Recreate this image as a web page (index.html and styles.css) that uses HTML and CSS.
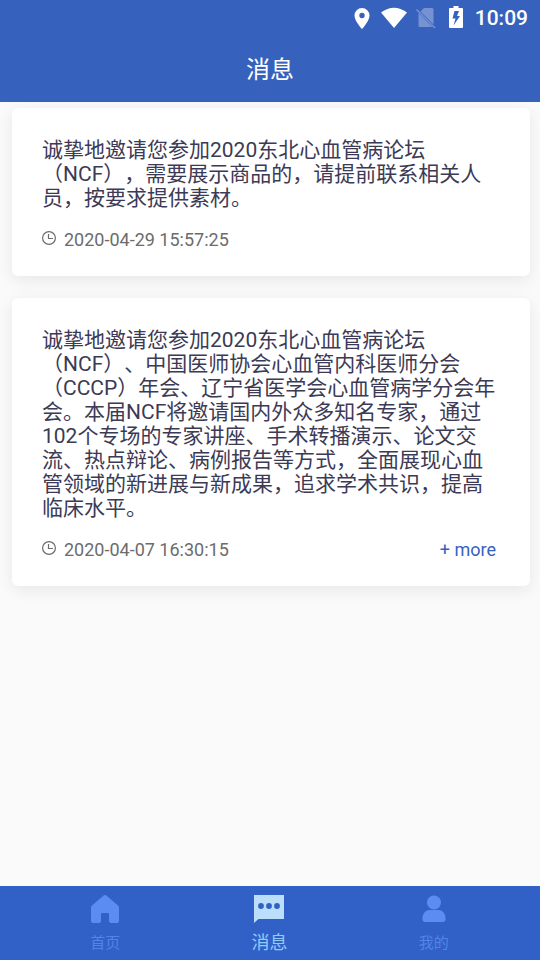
FILE: index.html
```html
<!DOCTYPE html>
<html lang="zh-CN">
<head>
<meta charset="utf-8">
<meta name="viewport" content="width=device-width, initial-scale=1">
<title>消息</title>
<link rel="stylesheet" href="styles.css">
</head>
<body>
<header class="header">
  <div class="status">
    <svg class="status-pin" width="16" height="22" viewBox="0 0 16 22"><path fill="#fff" fill-rule="evenodd" d="M8 1a7.500 7.500 0 0 0-7.500 7.500C.5 14 8 22 8 22s7.500-8 7.500-13.500A7.500 7.500 0 0 0 8 1zm0 4.800a2.700 2.700 0 1 1 0 5.400 2.700 2.700 0 0 1 0-5.400z"/></svg>
    <svg class="status-wifi" width="26" height="22" viewBox="0 0 26 22"><path fill="#fff" d="M0 5.500Q13-4 26 5.500L13 21z"/></svg>
    <svg class="status-sim" width="20" height="22" viewBox="0 0 20 22"><path fill="#7692d2" d="M8 1h8q1.500 0 1.500 1.500V17.500L4.500 4.500zM2.500 6 16.500 20H4q-1.500 0-1.500-1.500z"/><path stroke="#7692d2" stroke-width="1.400" d="m.5 2.500 18.500 18.500"/></svg>
    <svg class="status-battery" width="14" height="22" viewBox="0 0 14 22"><path fill="#fff" fill-rule="evenodd" d="M4.500 0h5v2H13q1 0 1 1v18q0 1-1 1H1q-1 0-1-1V3q0-1 1-1h3.500zM5.500 5 3.500 12.500h3L4.500 19.500l6.500-9.500H8L10 5z"/></svg>
    <span class="clock">10:09</span>
  </div>
  <h1 class="title">消息</h1>
</header>
<main class="list">
  <article class="card">
    <p class="text">诚挚地邀请您参加2020东北心血管病论坛（NCF），需要展示商品的，请提前联系相关人员，按要求提供素材。</p>
    <div class="meta">
      <svg class="time-icon" width="14" height="14" viewBox="0 0 14 14" fill="none" stroke="#6c6c6c" stroke-width="1.200"><circle cx="7" cy="7" r="6.400"/><path d="M6.500 3v4.500H11"/></svg>
      <time>2020-04-29 15:57:25</time>
    </div>
  </article>
  <article class="card">
    <p class="text">诚挚地邀请您参加2020东北心血管病论坛（NCF）、中国医师协会心血管内科医师分会（CCCP）年会、辽宁省医学会心血管病学分会年会。本届NCF将邀请国内外众多知名专家，通过102个专场的专家讲座、手术转播演示、论文交流、热点辩论、病例报告等方式，全面展现心血管领域的新进展与新成果，追求学术共识，提高临床水平。</p>
    <div class="meta">
      <svg class="time-icon" width="14" height="14" viewBox="0 0 14 14" fill="none" stroke="#6c6c6c" stroke-width="1.200"><circle cx="7" cy="7" r="6.400"/><path d="M6.500 3v4.500H11"/></svg>
      <time>2020-04-07 16:30:15</time>
      <a class="more" href="#">+ more</a>
    </div>
  </article>
</main>
<nav class="tabs">
  <a class="tab" href="#">
    <svg width="30" height="30" viewBox="0 0 30 30"><path fill="#5b8cf0" d="M13.600 1.500q1.400-1.200 2.800 0L28 11.500q1 .9 1 2V27q0 2-2 2h-6q-2 0-2-2v-7q0-1-1-1h-6q-1 0-1 1v7q0 2-2 2H3q-2 0-2-2V13.500q0-1.100 1-2z"/></svg>
    <span>首页</span>
  </a>
  <a class="tab active" href="#" aria-current="page">
    <svg width="30" height="30" viewBox="0 0 30 30"><path fill="#bbdefb" d="M0 1h30v24H4.500L0 29z"/><g fill="#3161c6"><circle cx="7" cy="12" r="2.900"/><circle cx="15" cy="12" r="2.900"/><circle cx="23" cy="12" r="2.900"/></g></svg>
    <span>消息</span>
  </a>
  <a class="tab" href="#">
    <svg width="30" height="30" viewBox="0 0 30 30"><g fill="#5b8cf0"><circle cx="15" cy="8.500" r="7"/><path d="M11 16h8q5 0 7 5 .6 1.500.6 4 0 3-3 3H6.400q-3 0-3-3 0-2.500.6-4Q6 16 11 16z"/></g></svg>
    <span>我的</span>
  </a>
</nav>
</body>
</html>
```
FILE: styles.css
```css
* {
  box-sizing: border-box;
}

body {
  margin: 0;
  min-height: 100vh;
  display: flex;
  flex-direction: column;
  background: #fafafa;
  font-family: Roboto, "Noto Sans CJK SC", sans-serif;
  text-spacing-trim: space-all;
}

a {
  color: inherit;
  text-decoration: none;
}

.header {
  background: #3662be;
  color: #fff;
}

.status {
  display: flex;
  justify-content: flex-end;
  align-items: center;
  height: 36px;
  padding-right: 12px;
}

.status-wifi {
  margin-left: 11px;
}

.status-sim {
  margin-left: 9px;
}

.status-battery {
  margin: 0 0 2px 13px;
}

.clock {
  margin-left: 12px;
  font-size: 21px;
  font-weight: 500;
  line-height: 36px;
}

.title {
  margin: 0;
  padding-top: 2px;
  font-size: 24px;
  font-weight: 400;
  line-height: 64px;
  text-align: center;
}

.list {
  flex: 1;
  display: flex;
  flex-direction: column;
  gap: 22px;
  padding: 6px 10px 22px 12px;
}

.card {
  padding: 30px 30px 24px;
  border-radius: 6px;
  background: #fff;
  box-shadow: 0 4px 16px rgba(0, 0, 0, 0.08);
}

.text {
  margin: 0;
  color: #3c3a54;
  font-size: 21px;
  line-height: 24px;
}

.meta {
  display: flex;
  align-items: center;
  margin-top: 18px;
  color: #6c6c6c;
  font-size: 18px;
  line-height: 24px;
}

.time-icon {
  margin: 0 8px 4px 0;
}

.more {
  margin-left: auto;
  padding-right: 4px;
  color: #3662be;
}

.tabs {
  display: flex;
  padding: 8px 24px 4px 23px;
  background: #3161c6;
  color: #5283e6;
  font-size: 15px;
}

.tab {
  flex: 1;
  display: flex;
  flex-direction: column;
  align-items: center;
  gap: 6px;
  line-height: 26px;
}

.active {
  color: #90caf9;
  font-size: 18px;
}
```
